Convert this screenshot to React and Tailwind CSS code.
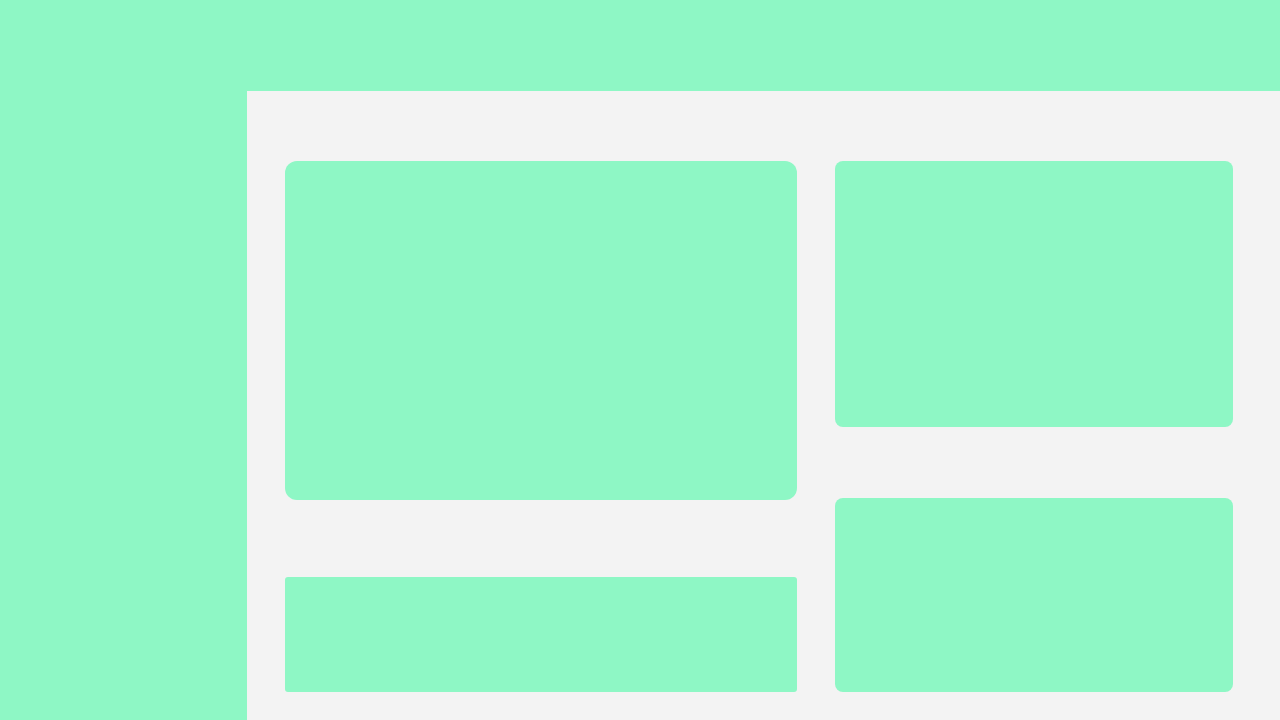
export default function App() {
  return (
    <div className="flex flex-col h-[720px] w-[1280px] bg-[#f3f3f3] overflow-hidden">
      {/* Top bar */}
      <div className="h-[91px] w-full shrink-0 bg-[#8ef7c5]" />

      <div className="flex flex-1 min-h-0">
        {/* Sidebar */}
        <div className="w-[247px] shrink-0 bg-[#8ef7c5]" />

        {/* Content */}
        <div className="flex gap-[38px] pl-[38px] pt-[70px]">
          <div className="flex flex-col w-[512px] gap-[77px]">
            <div className="h-[339px] rounded-xl bg-[#8ef7c5]" />
            <div className="h-[115px] rounded-[3px] bg-[#8ef7c5]" />
          </div>
          <div className="flex flex-col w-[398px] gap-[71px]">
            <div className="h-[266px] rounded-lg bg-[#8ef7c5]" />
            <div className="h-[194px] rounded-lg bg-[#8ef7c5]" />
          </div>
        </div>
      </div>
    </div>
  )
}
